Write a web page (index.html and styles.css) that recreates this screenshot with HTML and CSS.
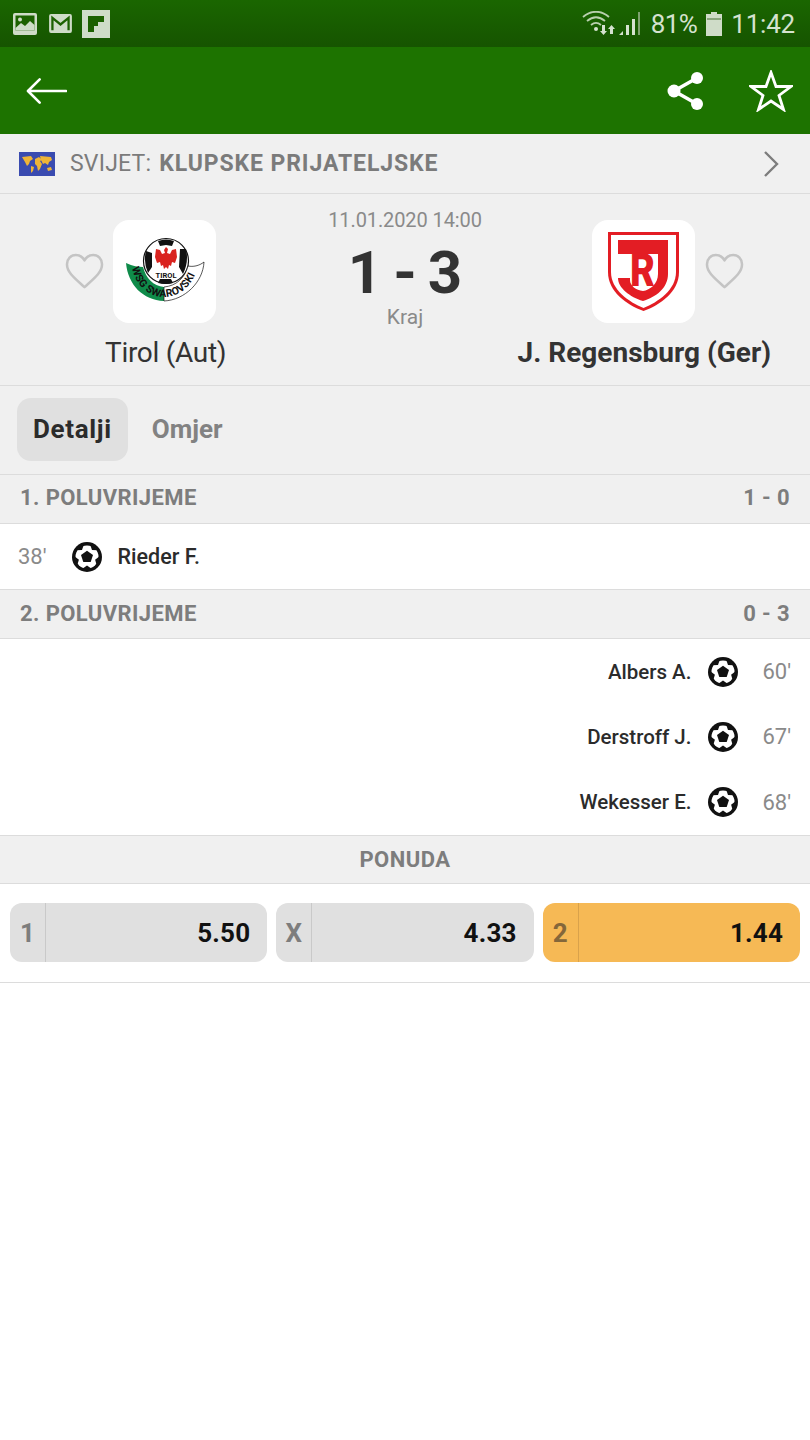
FILE: index.html
```html
<!DOCTYPE html>
<html lang="hr">
<head>
<meta charset="utf-8">
<title>Tirol - Regensburg</title>
<link rel="stylesheet" href="styles.css">
</head>
<body>
<div class="statusbar">
  <div class="notif">
    <svg class="n-pic" viewBox="0 0 24 22"><rect width="24" height="22" rx="2" fill="#cfdcc8"/><rect x="2.500" y="2.500" width="19" height="15" fill="#1c6100"/><circle cx="7" cy="6.500" r="2" fill="#cfdcc8"/><path d="M2.500 15 L8 10 L12 13 L17 8 L21.500 12 V17.500 H2.500Z" fill="#cfdcc8"/></svg>
    <svg class="n-mail" viewBox="0 0 24 20"><rect width="24" height="20" rx="2" fill="#cfdcc8"/><path d="M3.500 17V4L12 11L20.500 4V17" fill="none" stroke="#1c6100" stroke-width="2.400"/></svg>
    <svg class="n-flip" viewBox="0 0 28 28"><rect width="28" height="28" fill="#cfdcc8"/><path d="M6 6H22V12H16V16H12V22H6Z" fill="#1c6100"/></svg>
  </div>
  <div class="sys">
    <svg class="s-wifi" viewBox="0 0 60 26"><g fill="none" stroke="#b9cfae" stroke-width="1.800"><path d="M1 6C9 -1 19 -1 27 6"/><path d="M5 10C11 5 17 5 23 10"/><path d="M9 14C12 11.500 16 11.500 19 14"/></g><circle cx="14" cy="18" r="2" fill="#d5e2cf"/><path d="M20 14H23V20H25L21.500 24L18 20H20Z" fill="#d5e2cf"/><path d="M28 23V18H26L29.500 14L33 18H31V23Z" fill="#d5e2cf"/><path d="M37 24H41V20Z" fill="#d5e2cf"/><rect x="44" y="14" width="3" height="10" fill="#d5e2cf"/><rect x="50" y="8" width="3" height="16" fill="#d5e2cf"/><rect x="56" y="1" width="2" height="23" fill="#7ea26f"/></svg>
    <span class="s-pct">81%</span>
    <svg class="s-batt" viewBox="0 0 16 24"><path d="M5 0H11V2H16V24H0V2H5Z" fill="#cfdcc8"/><rect x="1" y="6" width="14" height="2" fill="#8aa67e"/></svg>
    <span class="s-time">11:42</span>
  </div>
</div>

<header class="toolbar">
  <svg class="t-back" viewBox="0 0 42 28"><path d="M41 14H3M14 2L2 14L14 26" fill="none" stroke="#fff" stroke-width="2.600" stroke-linecap="round" stroke-linejoin="round"/></svg>
  <div class="t-actions">
    <svg class="t-share" viewBox="0 0 38 40"><path d="M30 7L7 20L30 33" fill="none" stroke="#fff" stroke-width="3.500"/><circle cx="30" cy="7" r="6" fill="#fff"/><circle cx="7" cy="20" r="6.500" fill="#fff"/><circle cx="30" cy="33" r="6" fill="#fff"/></svg>
    <svg class="t-star" viewBox="0 0 44 42"><path d="M22 2.500L27 16.500H42L30 25.500L34.500 39.500L22 31L9.500 39.500L14 25.500L2 16.500H17Z" fill="none" stroke="#fff" stroke-width="2.800" stroke-linejoin="miter"/></svg>
  </div>
</header>

<nav class="crumb">
  <svg class="c-flag" viewBox="0 0 36 24"><rect width="36" height="24" fill="#3a4bb0"/><path d="M3 5L12 4L14 7L11 9L10 12L8 14L6 10Z M12 14L15 15L14 19L12 21Z M16 7L20 5L23 8L21 9L23 12L21 17L19 19L18 14L16 12Z M21 4L32 5L33 8L30 10L29 13L26 11L24 12L22 8Z M28 16L32 15L33 18L29 19Z" fill="#efb437"/></svg>
  <span class="c-text">SVIJET: <b>KLUPSKE PRIJATELJSKE</b></span>
  <svg class="c-arrow" viewBox="0 0 16 28"><path d="M2 2L14 14L2 26" fill="none" stroke="#7d7d7d" stroke-width="2.400"/></svg>
</nav>

<section class="match">
  <div class="team">
    <div class="team-top">
      <svg class="heart" viewBox="0 0 40 38"><path d="M20 35C10 26 2 20 2 11.500C2 6 6 2 11 2C15 2 18 4 20 7.500C22 4 25 2 29 2C34 2 38 6 38 11.500C38 20 30 26 20 35Z" fill="none" stroke="#c4c4c4" stroke-width="2.600" stroke-linejoin="round"/></svg>
      <div class="crest">
        <svg class="crest-svg" viewBox="0 0 103 103">
          <circle cx="53" cy="41" r="22.500" fill="#fff" stroke="#111" stroke-width="1.200"/>
          <path d="M45 21Q53 18 61 21L59 26L53 25L47 26Z M33 31L39 33L39 47L35 53Q30 42 33 31Z M73 29L67 29L66 47L70 54Q76 42 73 29Z M47 59H58L60 63Q53 65 45 63Z" fill="#111"/>
          <path d="M53 27L55 29L54 33L57 34L59 30L63 29L64 37L62 43L59 42L58 46L56 45L55 49L53 47L51 49L50 45L48 46L47 42L44 43L42 37L43 29L47 30L49 34L52 33L51 30Z" fill="#d9231f"/>
          <text class="crest-tirol" x="53" y="57.500" text-anchor="middle">TIROL</text>
          <path d="M13 43C20 46 25 47 30 47C33 58 40 66 51 67V81C30 80 15 65 13 43Z" fill="#0f8b4a"/>
          <path d="M51 67C63 66 72 58 75 46C80 47 86 46 91 42C90 62 72 80 51 81Z" fill="#fff" stroke="#111" stroke-width=".7"/>
          <path id="crest-arc" d="M19 48C23 66 36 77 51 77C67 77 79 66 85 47" fill="none"/>
          <text class="crest-band"><textPath href="#crest-arc">WSG SWAROVSKI</textPath></text>
        </svg>
      </div>
    </div>
    <div class="team-name">Tirol (Aut)</div>
  </div>
  <div class="score">
    <div class="sc-date">11.01.2020 14:00</div>
    <div class="sc-main">1 - 3</div>
    <div class="sc-status">Kraj</div>
  </div>
  <div class="team team-right">
    <div class="team-top">
      <div class="crest">
        <svg class="crest-svg2" viewBox="0 0 72 80">
          <path d="M0 0H71V40C71 60 52 73 35.500 79C19 73 0 60 0 40Z" fill="#e31d24"/>
          <path d="M3 3H68V40C68 58 50 70 35.500 76C21 70 3 58 3 40Z" fill="#fff"/>
          <path d="M10 8H60V42C60 56 48 65 35 69C22 65 10 56 10 46H22V48C22 54 28 58 35 59C42 58 50 52 50 42V22H10Z" fill="#e31d24"/>
          <text class="crest-r" x="22" y="54" textLength="25" lengthAdjust="spacingAndGlyphs">R</text>
        </svg>
      </div>
      <svg class="heart" viewBox="0 0 40 38"><path d="M20 35C10 26 2 20 2 11.500C2 6 6 2 11 2C15 2 18 4 20 7.500C22 4 25 2 29 2C34 2 38 6 38 11.500C38 20 30 26 20 35Z" fill="none" stroke="#c4c4c4" stroke-width="2.600" stroke-linejoin="round"/></svg>
    </div>
    <div class="team-name team-name-bold">J. Regensburg (Ger)</div>
  </div>
</section>

<div class="tabs">
  <span class="tab tab-on">Detalji</span>
  <span class="tab">Omjer</span>
</div>

<div class="sec"><span>1. POLUVRIJEME</span><span>1 - 0</span></div>
<div class="events events-one">
  <div class="ev">
    <span class="ev-min">38'</span>
    <svg class="ball" viewBox="0 0 30 30"><use href="#ball"/></svg>
    <span class="ev-name">Rieder F.</span>
  </div>
</div>
<div class="sec sec-two"><span>2. POLUVRIJEME</span><span>0 - 3</span></div>
<div class="events events-two">
  <div class="ev ev-away">
    <span class="ev-name">Albers A.</span>
    <svg class="ball" viewBox="0 0 30 30"><use href="#ball"/></svg>
    <span class="ev-min">60'</span>
  </div>
  <div class="ev ev-away">
    <span class="ev-name">Derstroff J.</span>
    <svg class="ball" viewBox="0 0 30 30"><use href="#ball"/></svg>
    <span class="ev-min">67'</span>
  </div>
  <div class="ev ev-away">
    <span class="ev-name">Wekesser E.</span>
    <svg class="ball" viewBox="0 0 30 30"><use href="#ball"/></svg>
    <span class="ev-min">68'</span>
  </div>
</div>
<div class="sec sec-center">PONUDA</div>
<div class="odds">
  <div class="odd"><span class="odd-k">1</span><span class="odd-v">5.50</span></div>
  <div class="odd"><span class="odd-k">X</span><span class="odd-v">4.33</span></div>
  <div class="odd odd-win"><span class="odd-k">2</span><span class="odd-v">1.44</span></div>
</div>

<svg class="defs" width="0" height="0">
  <symbol id="ball" viewBox="0 0 30 30">
    <circle cx="15" cy="15" r="15" fill="#111"/>
    <circle cx="15" cy="15" r="11.500" fill="#fff"/>
    <path d="M15 8.800L21 13L18.700 20H11.300L9 13Z" fill="#111"/>
    <path d="M10 3H20L15 6.500Z" fill="#111" transform="rotate(36 15 15)"/>
    <path d="M10 3H20L15 6.500Z" fill="#111" transform="rotate(108 15 15)"/>
    <path d="M10 3H20L15 6.500Z" fill="#111" transform="rotate(180 15 15)"/>
    <path d="M10 3H20L15 6.500Z" fill="#111" transform="rotate(252 15 15)"/>
    <path d="M10 3H20L15 6.500Z" fill="#111" transform="rotate(324 15 15)"/>
  </symbol>
</svg>
</body>
</html>
```
FILE: styles.css
```css
* { box-sizing: border-box; }
html, body { margin: 0; padding: 0; }
body { width: 810px; height: 1440px; background: #fff; font-family: Roboto, "Liberation Sans", sans-serif; color: #222; overflow: hidden; }
.defs { position: absolute; }

.statusbar { height: 47px; display: flex; justify-content: space-between; align-items: center; padding: 0 15px 0 13px; background: linear-gradient(#1a6600, #165400); }
.notif { display: flex; align-items: center; }
.n-pic { width: 24px; height: 22px; }
.n-mail { width: 23px; height: 19px; margin-left: 12px; }
.n-flip { width: 28px; height: 28px; margin-left: 10px; }
.sys { display: flex; align-items: center; color: #d5e2cf; font-size: 26px; }
.s-wifi { width: 60px; height: 26px; margin-right: 9px; }
.s-pct { letter-spacing: -.6px; }
.s-batt { width: 16px; height: 24px; margin: 0 9px; }
.s-time { letter-spacing: -.2px; }

.toolbar { height: 87px; background: #1d7300; display: flex; justify-content: space-between; align-items: center; padding: 0 17px 0 26px; }
.t-back { width: 41px; height: 28px; }
.t-actions { display: flex; align-items: center; gap: 44px; }
.t-share { width: 38px; height: 40px; }
.t-star { width: 44px; height: 42px; }

.crumb { height: 60px; background: #f0f0f0; border-bottom: 1px solid #dcdcdc; display: flex; align-items: center; padding: 0 31px 0 19px; }
.c-flag { width: 36px; height: 24px; margin-right: 15px; }
.c-text { flex: 1; font-size: 23px; color: #7b7b7b; letter-spacing: .2px; }
.c-text b { font-weight: 700; letter-spacing: .9px; margin-left: 2px; }
.c-arrow { width: 16px; height: 28px; }

.match { height: 192px; background: #f0f0f0; border-bottom: 1px solid #dcdcdc; display: grid; grid-template-columns: 320px 170px 320px; }
.team { display: flex; flex-direction: column; align-items: flex-start; padding: 26px 0 0 65px; }
.team-right { align-items: flex-end; padding: 26px 65px 0 0; }
.team-top { display: flex; align-items: center; gap: 9px; }
.team-right .team-top { gap: 10px; }
.heart { width: 39px; height: 37px; }
.crest { width: 103px; height: 103px; background: #fff; border-radius: 16px; display: flex; align-items: center; justify-content: center; }
.crest-svg { width: 103px; height: 103px; }
.crest-svg2 { width: 72px; height: 80px; }
.crest-tirol { font: 700 7.500px Roboto, sans-serif; fill: #111; }
.crest-band { font: 700 10.500px Roboto, sans-serif; fill: #111; letter-spacing: .2px; }
.crest-r { font: 900 47px Roboto, sans-serif; fill: #e31d24; }
.team-name { font-size: 28px; color: #333; margin-top: 13px; margin-left: 40px; line-height: 34px; letter-spacing: -.3px; }
.team-name-bold { font-weight: 700; margin: 13px -26px 0 0; letter-spacing: 0; white-space: nowrap; }

.score { text-align: center; padding-top: 13px; color: #8a8a8a; }
.sc-date { font-size: 20px; line-height: 26px; letter-spacing: -.1px; }
.sc-main { font-size: 60px; font-weight: 700; color: #333; line-height: 60px; margin-top: 10px; word-spacing: -4px; }
.sc-status { font-size: 21px; line-height: 22px; margin-top: 3px; }

.tabs { height: 89px; background: #f0f0f0; border-bottom: 1px solid #dcdcdc; display: flex; align-items: center; padding: 0 17px 1px; }
.tab { font-size: 26px; font-weight: 700; color: #828282; height: 63px; line-height: 63px; padding: 0 16px; border-radius: 14px; margin-right: 8px; }
.tab-on { background: #e0e0e0; color: #2b2b2b; letter-spacing: .65px; }

.sec { height: 49px; background: #f0f0f0; border-bottom: 1px solid #dcdcdc; display: flex; align-items: center; justify-content: space-between; padding: 0 20px 3px; font-size: 22px; font-weight: 700; color: #7d7d7d; letter-spacing: .4px; }
.sec-two { padding-bottom: 1px; }
.sec-center { justify-content: center; height: 48px; padding-bottom: 0; letter-spacing: .5px; }

.events { background: #fff; border-bottom: 1px solid #dcdcdc; }
.ev { height: 65.330px; display: flex; align-items: center; padding: 0 19px 0 18px; font-size: 22px; }
.events-one .ev { height: 65px; }
.events-two { height: 197px; }
.ev-away { justify-content: flex-end; }
.ev-min { color: #8a8a8a; }
.ev-name { color: #2b2b2b; font-weight: 500; font-size: 20.500px; }
.events-one .ev-name { font-size: 21.500px; }
.ball { width: 30px; height: 30px; margin: 0 16px 0 25px; }
.ev-away .ball { margin: 0 24px 0 17px; }

.odds { height: 99px; background: #fff; border-bottom: 1px solid #dcdcdc; display: grid; grid-template-columns: repeat(3, 1fr); gap: 9px; padding: 19px 10px 20px; }
.odd { background: #e0e0e0; border-radius: 12px; display: flex; align-items: center; overflow: hidden; }
.odd-k { width: 36px; height: 100%; border-right: 1px solid #c9c9c9; display: flex; align-items: center; justify-content: center; font-size: 26px; font-weight: 700; color: #7d7d7d; }
.odd-v { flex: 1; text-align: right; padding-right: 17px; font-size: 26px; font-weight: 700; color: #111; letter-spacing: .2px; }
.odd-win { background: #f6b955; }
.odd-win .odd-k { color: #84673a; border-right-color: #d9a24b; }

.team-right { padding-right: 65px; }
.team-right .team-top { transform: none; margin-right: 1px; }
```
